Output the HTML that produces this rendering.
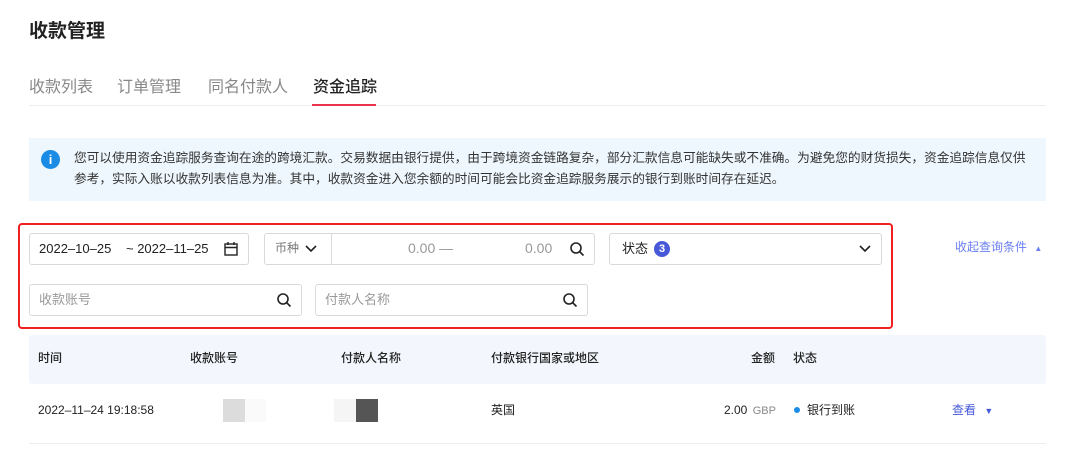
<!DOCTYPE html>
<html><head><meta charset="utf-8"><style>
*{box-sizing:border-box;margin:0;padding:0}
body{width:1080px;height:455px;background:#fff;font-family:"Liberation Sans","Noto Sans CJK SC",sans-serif;color:#222;position:relative;overflow:hidden}
.a{position:absolute;white-space:nowrap}
.box{position:absolute;border:1px solid #d9d9d9;border-radius:3px;background:#fff}
.ph{color:#999;font-size:13px}
</style></head><body>
<div class="a" style="left:29px;top:16px;font-size:19px;font-weight:bold;color:#222">收款管理</div>
<div class="a" style="left:29px;top:73px;font-size:16px;color:#888">收款列表</div>
<div class="a" style="left:117px;top:73px;font-size:16px;color:#888">订单管理</div>
<div class="a" style="left:208px;top:73px;font-size:16px;color:#888">同名付款人</div>
<div class="a" style="left:313px;top:73px;font-size:16px;color:#222;font-weight:500">资金追踪</div>
<div class="a" style="left:29px;top:105px;width:1017px;height:1px;background:#eee"></div>
<div class="a" style="left:312px;top:104px;width:64px;height:2px;background:#e8334a"></div>
<div class="a" style="left:29px;top:138px;width:1017px;height:63px;background:#eef7fd"></div>
<div class="a" style="left:41px;top:150px;width:19px;height:19px;border-radius:50%;background:#1a8ce6;color:#fff;font-size:13px;font-weight:bold;text-align:center;line-height:19px">i</div>
<div class="a" style="left:74px;top:148px;font-size:12.7px;line-height:21px;color:#333">您可以使用资金追踪服务查询在途的跨境汇款。交易数据由银行提供，由于跨境资金链路复杂，部分汇款信息可能缺失或不准确。为避免您的财货损失，资金追踪信息仅供<br>参考，实际入账以收款列表信息为准。其中，收款资金进入您余额的时间可能会比资金追踪服务展示的银行到账时间存在延迟。</div>
<div class="a" style="left:18px;top:223px;width:875px;height:106px;border:2px solid #f02020;border-radius:4px"></div>
<div class="box" style="left:29px;top:233px;width:220px;height:32px"></div>
<div class="a" style="left:39px;top:241px;font-size:13px">2022–10–25</div>
<div class="a" style="left:126px;top:241px;font-size:13px">~ 2022–11–25</div>
<svg class="a" style="left:223px;top:241px" width="16" height="16" viewBox="0 0 16 16" fill="none" stroke="#222" stroke-width="1.4"><rect x="2" y="3" width="12" height="11"/><path d="M2 6.5h12M5 1v3M11 1v3"/></svg>
<div class="box" style="left:264px;top:233px;width:331px;height:32px"></div>
<div class="a" style="left:331px;top:233px;width:1px;height:32px;background:#d9d9d9"></div>
<div class="a" style="left:275px;top:239px;font-size:12px;color:#777">币种</div>
<svg class="a" style="left:304px;top:243px" width="14" height="12" viewBox="0 0 14 12" fill="none" stroke="#222" stroke-width="1.6"><path d="M2 3l5 5 5-5"/></svg>
<div class="a ph" style="left:408px;top:240px;font-size:14px">0.00 —</div>
<div class="a ph" style="left:525px;top:240px;font-size:14px">0.00</div>
<svg class="a" style="left:569px;top:241px" width="16" height="16" viewBox="0 0 16 16" fill="none" stroke="#222" stroke-width="1.6"><circle cx="7" cy="7" r="5"/><path d="M11 11l3.5 3.5"/></svg>
<div class="box" style="left:609px;top:233px;width:273px;height:32px"></div>
<div class="a" style="left:622px;top:238px;font-size:13px">状态</div>
<div class="a" style="left:654px;top:241px;width:16px;height:16px;border-radius:50%;background:#4758d8;color:#fff;font-size:11px;font-weight:bold;text-align:center;line-height:16px">3</div>
<svg class="a" style="left:858px;top:243px" width="14" height="12" viewBox="0 0 14 12" fill="none" stroke="#222" stroke-width="1.6"><path d="M2 3l5 5 5-5"/></svg>
<div class="a" style="left:955px;top:238px;font-size:12px;color:#6b7ff0">收起查询条件 <span style="font-size:8px;margin-left:4px">▲</span></div>
<div class="box" style="left:29px;top:284px;width:273px;height:32px"></div>
<div class="a ph" style="left:39px;top:289px">收款账号</div>
<svg class="a" style="left:276px;top:292px" width="16" height="16" viewBox="0 0 16 16" fill="none" stroke="#222" stroke-width="1.6"><circle cx="7" cy="7" r="5"/><path d="M11 11l3.5 3.5"/></svg>
<div class="box" style="left:315px;top:284px;width:273px;height:32px"></div>
<div class="a ph" style="left:325px;top:289px">付款人名称</div>
<svg class="a" style="left:562px;top:292px" width="16" height="16" viewBox="0 0 16 16" fill="none" stroke="#222" stroke-width="1.6"><circle cx="7" cy="7" r="5"/><path d="M11 11l3.5 3.5"/></svg>
<div class="a" style="left:29px;top:335px;width:1017px;height:49px;background:#f3f7fd;border-radius:3px"></div>
<div class="a" style="left:38px;top:349px;font-size:12px;font-weight:500">时间</div>
<div class="a" style="left:190px;top:349px;font-size:12px;font-weight:500">收款账号</div>
<div class="a" style="left:341px;top:349px;font-size:12px;font-weight:500">付款人名称</div>
<div class="a" style="left:491px;top:349px;font-size:12px;font-weight:500">付款银行国家或地区</div>
<div class="a" style="left:751px;top:349px;font-size:12px;font-weight:500">金额</div>
<div class="a" style="left:793px;top:349px;font-size:12px;font-weight:500">状态</div>
<div class="a" style="left:38px;top:403px;font-size:12px">2022–11–24 19:18:58</div>
<div class="a" style="left:223px;top:399px;width:22px;height:23px;background:#dcdcdc"></div>
<div class="a" style="left:245px;top:399px;width:21px;height:23px;background:#fafafa"></div>
<div class="a" style="left:334px;top:399px;width:22px;height:23px;background:#f5f5f5"></div>
<div class="a" style="left:356px;top:399px;width:22px;height:23px;background:#555"></div>
<div class="a" style="left:491px;top:401px;font-size:12px">英国</div>
<div class="a" style="left:724px;top:403px;font-size:12px">2.00 <span style="color:#888;margin-left:2px;font-size:11px">GBP</span></div>
<div class="a" style="left:794px;top:407px;width:6px;height:6px;border-radius:50%;background:#1a8ce6"></div>
<div class="a" style="left:807px;top:401px;font-size:12px">银行到账</div>
<div class="a" style="left:952px;top:401px;font-size:12px;color:#4758d8">查看 <span style="font-size:9px;margin-left:5px">▼</span></div>
<div class="a" style="left:29px;top:443px;width:1017px;height:1px;background:#eee"></div>
</body></html>
